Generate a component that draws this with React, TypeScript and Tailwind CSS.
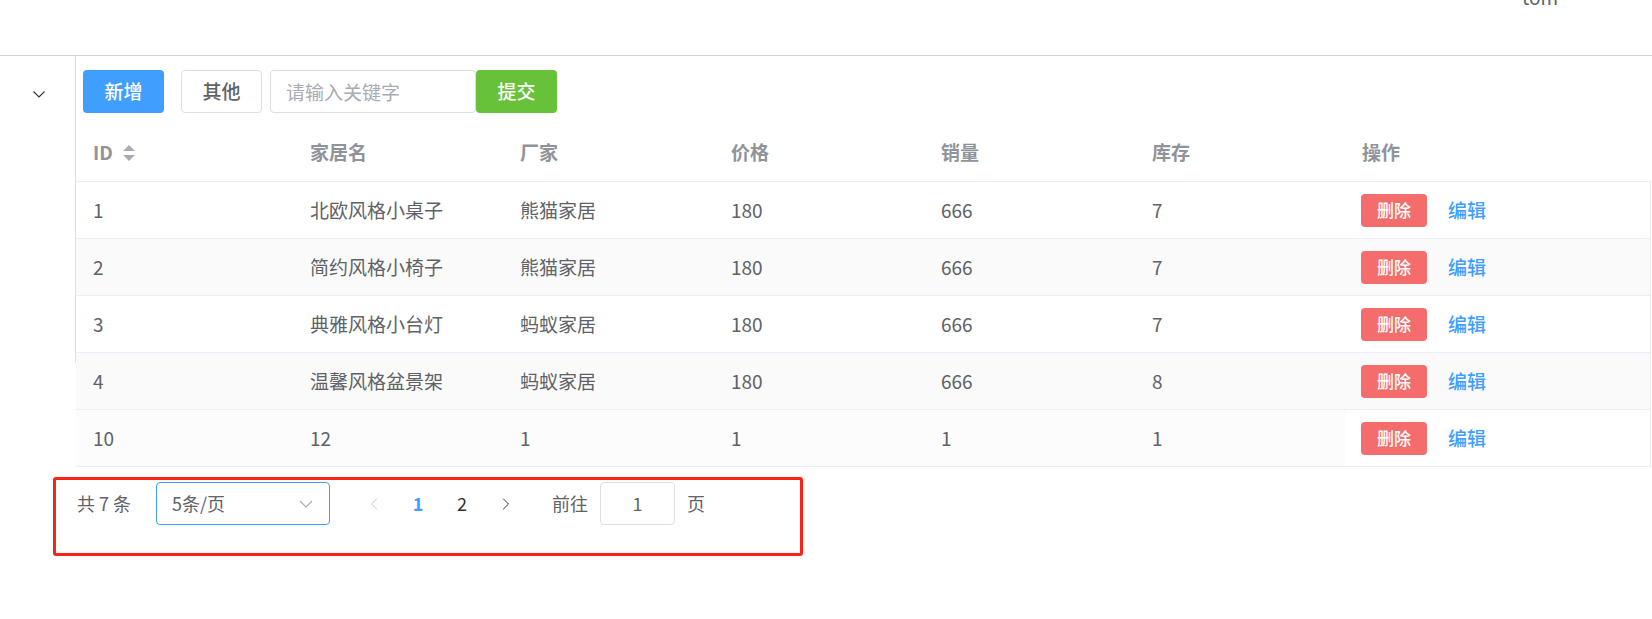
import { ChevronLeft, ChevronRight } from 'lucide-react'

interface Furn {
  id: number
  name: string
  maker: string
  price: number
  sales: number
  stock: number
}

const rows: Furn[] = [
  { id: 1, name: '北欧风格小桌子', maker: '熊猫家居', price: 180, sales: 666, stock: 7 },
  { id: 2, name: '简约风格小椅子', maker: '熊猫家居', price: 180, sales: 666, stock: 7 },
  { id: 3, name: '典雅风格小台灯', maker: '蚂蚁家居', price: 180, sales: 666, stock: 7 },
  { id: 4, name: '温馨风格盆景架', maker: '蚂蚁家居', price: 180, sales: 666, stock: 8 },
  { id: 10, name: '12', maker: '1', price: 1, sales: 1, stock: 1 },
]

const cols = 'grid grid-cols-[217px_210px_211px_210px_211px_210px_1fr]'

function SortCaret() {
  return (
    <span className="ml-[10px] flex flex-col gap-[4px]">
      <svg width="12" height="6" viewBox="0 0 12 6">
        <path d="M6 0 L12 6 L0 6 Z" fill="#a8abb2" />
      </svg>
      <svg width="12" height="6" viewBox="0 0 12 6">
        <path d="M0 0 L12 0 L6 6 Z" fill="#a8abb2" />
      </svg>
    </span>
  )
}

function Row({ r, i }: { r: Furn; i: number }) {
  const striped = i % 2 === 1
  const hovered = i === 4
  const bg = striped ? 'bg-[#fafafa]' : hovered ? 'bg-[#fcfcfc]' : 'bg-white'
  return (
    <div className={`${cols} h-[57px] border-b border-[#ebeef5] ${bg} text-[19px] text-[#606266]`}>
      <div className="flex items-center pl-[17px]">{r.id}</div>
      <div className="flex items-center pl-[17px]">{r.name}</div>
      <div className="flex items-center pl-[17px]">{r.maker}</div>
      <div className="flex items-center pl-[17px]">{r.price}</div>
      <div className="flex items-center pl-[17px]">{r.sales}</div>
      <div className="flex items-center pl-[17px]">{r.stock}</div>
      <div className={`flex items-center pl-[16px] ${striped ? 'bg-[#fafafa]' : 'bg-white'}`}>
        <button className="h-[33px] w-[66px] rounded-[4px] bg-[#f56c6c] text-[17px] font-medium text-white">删除</button>
        <button className="ml-[21px] text-[19px] font-medium text-[#409eff]">编辑</button>
      </div>
    </div>
  )
}

export default function App() {
  return (
    <div className="relative h-[619px] w-full overflow-hidden bg-white font-['Noto_Sans_CJK_SC',sans-serif]">
      <header className="flex h-[56px] justify-end overflow-hidden border-b border-[#d2d2d2] pr-[94px]">
        <span className="mt-[-13px] block text-[19px] leading-[19px] text-[#606266]">tom</span>
      </header>

      <div className="flex">
        <aside className="h-[307px] w-[76px] shrink-0 border-r border-[#dcdfe6]">
          <div className="pl-[33px] pt-[35px]">
            <svg width="12" height="7" viewBox="0 0 12 7" fill="none">
              <path d="M0.5 0.5 L6 6 L11.5 0.5" stroke="#303133" strokeWidth="1.1" />
            </svg>
          </div>
        </aside>

        <main className="flex-1">
          <div className="ml-[7px] mt-[14px] flex h-[43px] items-center">
            <button className="h-[43px] w-[81px] rounded-[4px] bg-[#409eff] text-[19px] font-medium text-white">新增</button>
            <button className="ml-[17px] h-[43px] w-[81px] rounded-[4px] border border-[#dcdfe6] bg-white text-[19px] font-medium text-[#606266]">其他</button>
            <input
              className="ml-[8px] h-[43px] w-[206px] rounded-[4px] border border-[#dcdfe6] px-[15px] text-[19px] text-[#606266] outline-none placeholder:text-[#a8abb2]"
              placeholder="请输入关键字"
            />
            <button className="h-[43px] w-[81px] rounded-[4px] bg-[#67c23a] text-[19px] font-medium text-white">提交</button>
          </div>

          <div className="mt-[11px] w-[1575px]">
            <div className={`${cols} h-[58px] border-b border-[#ebeef5] text-[19px] font-bold text-[#909399]`}>
              <div className="flex items-center pl-[17px]">
                ID
                <SortCaret />
              </div>
              <div className="flex items-center pl-[17px]">家居名</div>
              <div className="flex items-center pl-[17px]">厂家</div>
              <div className="flex items-center pl-[17px]">价格</div>
              <div className="flex items-center pl-[17px]">销量</div>
              <div className="flex items-center pl-[17px]">库存</div>
              <div className="flex items-center pl-[17px]">操作</div>
            </div>
            <div className="border-r border-[#ebeef5]">
              {rows.map((r, i) => (
                <Row key={r.id} r={r} i={i} />
              ))}
            </div>
          </div>

          <div className="mt-[15px] flex h-[43px] items-center text-[18px] text-[#606266]">
            <span className="ml-[1px] w-[55px] whitespace-pre">共 7 条</span>
            <div className="ml-[24px] flex h-[43px] w-[174px] items-center justify-between rounded-[4px] border border-[#409eff] pl-[15px] pr-[16px]">
              <span>5条/页</span>
              <svg width="14" height="8" viewBox="0 0 14 8" fill="none">
                <path d="M1 1 L7 7 L13 1" stroke="#a8abb2" strokeWidth="1.2" />
              </svg>
            </div>
            <div className="ml-[22px] flex">
              <span className="flex h-[43px] w-[44px] items-center justify-center text-[#c0c4cc]">
                <ChevronLeft size={20} strokeWidth={1.2} />
              </span>
              <span className="flex h-[43px] w-[44px] items-center justify-center font-bold text-[#409eff]">1</span>
              <span className="flex h-[43px] w-[44px] items-center justify-center text-[#303133]">2</span>
              <span className="flex h-[43px] w-[44px] items-center justify-center text-[#303133]">
                <ChevronRight size={20} strokeWidth={1.2} />
              </span>
            </div>
            <span className="ml-[24px]">前往</span>
            <div className="ml-[12px] flex h-[43px] w-[75px] items-center justify-center rounded-[4px] border border-[#dcdfe6] text-[#606266]">1</div>
            <span className="ml-[12px]">页</span>
          </div>
        </main>
      </div>

      <div className="pointer-events-none absolute left-[53px] top-[477px] h-[79px] w-[750px] rounded-[3px] border-[3px] border-[#fa2318]" />
    </div>
  )
}
